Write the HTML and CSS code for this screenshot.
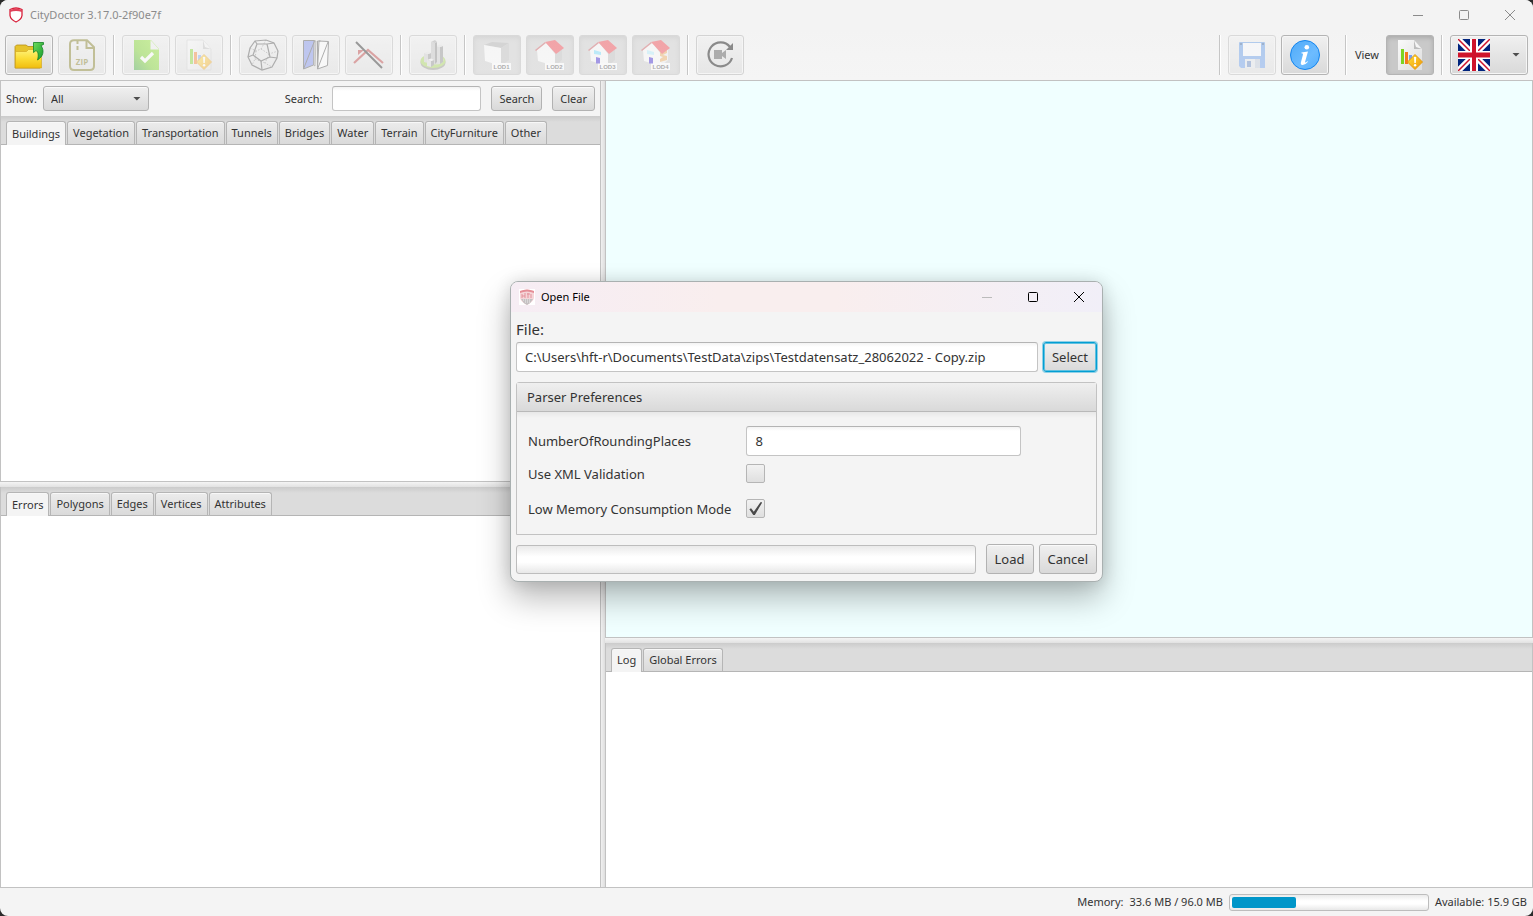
FILE: index.html
```html
<!DOCTYPE html>
<html lang="en">
<head>
<meta charset="utf-8">
<title>CityDoctor 3.17.0-2f90e7f</title>
<link rel="stylesheet" href="styles.css">
</head>
<body>
<svg class="defs" aria-hidden="true">
  <defs>
    <linearGradient id="gFolder" x1="0" y1="0" x2="0" y2="1"><stop offset="0" stop-color="#fff27a"/><stop offset=".5" stop-color="#fbdc35"/><stop offset="1" stop-color="#f0bd10"/></linearGradient>
    <linearGradient id="gArrow" x1="0" y1="0" x2="1" y2="1"><stop offset="0" stop-color="#6fdc5c"/><stop offset="1" stop-color="#119a2c"/></linearGradient>
    <linearGradient id="gCheck" x1="0" y1="1" x2="1" y2="0"><stop offset="0" stop-color="#2c9a28"/><stop offset=".4" stop-color="#6ccd10"/><stop offset="1" stop-color="#8fe820"/></linearGradient>
    <linearGradient id="gPage" x1="0" y1="0" x2="1" y2="1"><stop offset="0" stop-color="#fafafa"/><stop offset="1" stop-color="#dedede"/></linearGradient>
    <linearGradient id="gWarn" x1="0" y1="0" x2="1" y2="1"><stop offset="0" stop-color="#ffe23c"/><stop offset="1" stop-color="#f09400"/></linearGradient>
    <linearGradient id="gInfo" x1="0" y1="0" x2="1" y2="1"><stop offset="0" stop-color="#4faaf8"/><stop offset=".6" stop-color="#6dbcff"/><stop offset="1" stop-color="#55aefc"/></linearGradient>
    <linearGradient id="gDisk" x1="0" y1="0" x2="0" y2="1"><stop offset="0" stop-color="#4f8fe4"/><stop offset="1" stop-color="#5b93ea"/></linearGradient>
  </defs>
</svg>

<div class="window">
  <header class="titlebar">
    <svg class="shield" viewBox="0 0 16 16"><path d="M2 2.500Q8-.5 14 2.500V8.500Q13.500 12.500 8 15 2.500 12.500 2 8.500z" fill="#fff" stroke="#d8203a" stroke-width="1.300"/><path d="M2 3Q8 0 14 3V5Q8 3 2 5z" fill="#e0415a"/></svg>
    <span class="app-title">CityDoctor 3.17.0-2f90e7f</span>
    <div class="caption caption-main">
      <button aria-label="Minimize"><svg viewBox="0 0 12 12"><path d="M1 6.500h10"/></svg></button>
      <button aria-label="Maximize"><svg viewBox="0 0 12 12"><rect x="1.500" y="1.500" width="9" height="9" rx="1"/></svg></button>
      <button aria-label="Close"><svg viewBox="0 0 12 12"><path d="M1 1l10 10M11 1L1 11"/></svg></button>
    </div>
  </header>

  <div class="toolbar" role="toolbar">
    <button class="tool" aria-label="Open file"><svg viewBox="0 0 32 32">
      <path d="M2 29V7.500l1.500-1.500h9.500l2 1.500h12v21.500z" fill="#e6c32c" stroke="#b88f14" stroke-width=".8"/>
      <path d="M2.500 12.500h11l2-2h13v18.500h-26z" fill="url(#gFolder)" stroke="#d0a21b" stroke-width=".6"/>
      <path d="M20.500 3.500h10v2l-2.500 1c3.500 5 2.500 11-3.500 14.500 1.500-5 .5-8.500-1.500-9.500l-2.500 2z" fill="url(#gArrow)" stroke="#148127" stroke-width=".8"/></svg></button>
    <button class="tool" disabled aria-label="Zip"><svg viewBox="0 0 32 32">
      <path d="M8 1.200h13l7 7V27q0 4-4 4H8q-4 0-4-4V5q0-3.800 4-3.800z" fill="none" stroke="#76710f" stroke-width="2"/><path d="M20.500 2v7h7" fill="none" stroke="#76710f" stroke-width="2"/><path d="M11.500 2v3M11.500 7v4" stroke="#76710f" stroke-width="2"/>
      <text x="16" y="26" class="zip-text">ZIP</text></svg></button>
    <i class="sep"></i>
    <button class="tool" disabled aria-label="Check"><svg viewBox="0 0 32 32">
      <path d="M4 1h17l8 9v21H4z" fill="url(#gCheck)"/><path d="M20.500 1v9.500h8.500z" fill="#eee"/><path d="M11 18l4 4 8-8" fill="none" stroke="#fff" stroke-width="3.200"/></svg></button>
    <button class="tool" disabled aria-label="Report"><svg viewBox="0 0 32 32">
      <path d="M4 1h16l8 9v21H4z" fill="url(#gPage)" stroke="#b8b8b8" stroke-width=".6"/>
      <path d="M20 1v9h8z" fill="#bcbcbc"/><path d="M20 1l8 9-6-2z" fill="#f5f5f5"/>
      <path d="M7 10h3v15H7z" fill="#7ed321"/><path d="M11 13h3v12h-3z" fill="#f5791f"/><path d="M15 16h3v7h-3z" fill="#7aa0f0"/>
      <path d="M21 15.500l7.500 7.500-7.500 7.500-7.500-7.500z" fill="url(#gWarn)" stroke="#e39a12"/>
      <path d="M20 18h2.200l-.4 6h-1.400z" fill="#fff"/><circle cx="21.100" cy="26.200" r="1.200" fill="#fff"/></svg></button>
    <i class="sep"></i>
    <button class="tool" disabled aria-label="Show solid"><svg viewBox="0 0 32 32" fill="none" stroke="#454545" stroke-width="1.200">
      <path d="M8 2l11-1 8 3 4 8-1 7-5 9-10 3-10-5-4-8 2-9z"/><path d="M8 2l2 3 10 0 7-1M10 5L6 16l8 6 9-4-3-13M6 16l-5 2M14 22l1 9M23 18l7 1"/>
      <path d="M3 9l6 3 5-2 5-9M14 10l8 5 9-3M9 12l-1 8-3 6M22 15l-4 9 7 4M8 20l10 4" stroke-width=".6" stroke-dasharray="1.500 1.500"/></svg></button>
    <button class="tool" disabled aria-label="Show faces"><svg viewBox="0 0 32 32" stroke="#444" stroke-width="1">
      <path d="M3.500 1.500h11l-1 24.500-10 4z" fill="#6f82e8"/><path d="M14 1.500l2 .5-1 25-1.500-1z" fill="#bbb" stroke-width=".6"/><path d="M3.500 30L14.500 2" fill="none"/>
      <path d="M17.500 30l1.500-28 9.500.500-1 24z" fill="#fff"/><path d="M17.500 30L28 3M17.500 30V2h3" fill="none"/></svg></button>
    <button class="tool" disabled aria-label="Show edges"><svg viewBox="0 0 32 32" fill="none">
      <path d="M1 24L15 11l15 13" stroke="#b52c2c" stroke-width="2.200"/><path d="M5 11h6l-6 5z" fill="#b52c2c"/><path d="M3 3l26 26" stroke="#111" stroke-width="2"/></svg></button>
    <i class="sep"></i>
    <button class="tool" disabled aria-label="City model"><svg viewBox="0 0 32 32">
      <ellipse cx="16" cy="23.500" rx="12.500" ry="7.500" fill="#8a8a80"/><ellipse cx="16" cy="22" rx="12.500" ry="7" fill="#9fd04a"/><ellipse cx="19" cy="21" rx="7.500" ry="4.500" fill="#c5c9bd"/>
      <path d="M7 14l4 1v9l-4-1z" fill="#c9c9c9"/><path d="M11 15l3-1v9l-3 1z" fill="#8b8b8b"/><path d="M7 14l4-1.500 3 1.500-3 1z" fill="#dedede"/>
      <path d="M19 7l4 1v17l-4-1z" fill="#c9c9c9"/><path d="M23 8l3-1v16l-3 2z" fill="#858585"/><path d="M19 7l4-1.500 3 1.500-3 1z" fill="#dedede"/>
      <path d="M14 3l4 1v21l-4-1z" fill="#bcbcbc"/><path d="M18 4l2-1v20l-2 2z" fill="#7c7c7c"/><path d="M14 3l4-2 2 2-2 1z" fill="#a0a0a0"/>
      <path d="M10 21l4 1v6l-4-1z" fill="#d4d4d4"/><path d="M14 22l3-1v5l-3 2z" fill="#888"/><path d="M10 21l4-1.500 3 1.500-3 1z" fill="#eee"/></svg></button>
    <i class="sep"></i>
    <button class="tool on" disabled aria-label="LOD1"><svg viewBox="0 0 32 32"><path d="M3 6l8-3 17 1-8 5z" fill="#a6a6a6"/><path d="M3 6l17 3v18L4 22z" fill="#fafafa"/><path d="M20 9l8-5v17l-8 6z" fill="#b8b8b8"/><path d="M11 24h19v7H11z" fill="#fff"/><text x="20.500" y="30" class="lod-text">LOD1</text></svg></button>
    <button class="tool on" disabled aria-label="LOD2"><svg viewBox="0 0 32 32"><path d="M3 11l9-8 9 12v12L4 22z" fill="#fafafa"/><path d="M21 15l7-5v11l-7 6z" fill="#b8b8b8"/><path d="M11 3l10-2 9 8-8 6z" fill="#f0303a"/><path d="M11 3l1 1-10 8-1-1z" fill="#c84a50"/><path d="M11 24h19v7H11z" fill="#fff"/><text x="20.500" y="30" class="lod-text">LOD2</text></svg></button>
    <button class="tool on" disabled aria-label="LOD3"><svg viewBox="0 0 32 32"><path d="M3 11l9-8 9 12v12L4 22z" fill="#fafafa"/><path d="M21 15l7-5v11l-7 6z" fill="#b8b8b8"/><path d="M11 3l10-2 9 8-8 6z" fill="#f0303a"/><path d="M11 3l1 1-10 8-1-1z" fill="#c84a50"/><path d="M7 11l7 2v3l-7-1z" fill="#6bdcff"/><path d="M11 24h19v7H11z" fill="#fff"/><path d="M9 18l4 1v5.500H9z" fill="#2b10ce"/><text x="20.500" y="30" class="lod-text">LOD3</text></svg></button>
    <button class="tool on" disabled aria-label="LOD4"><svg viewBox="0 0 32 32"><path d="M3 11l9-8 9 12v12L4 22z" fill="#fafafa"/><path d="M21 15l7-5v11l-7 6z" fill="#eee"/><path d="M20 13l7-2v3l-4 2 4 1v4l-7 2v-3l3-2-3-1z" fill="#efa64e"/><path d="M11 3l10-2 9 8-8 6z" fill="#f0303a"/><path d="M11 3l1 1-10 8-1-1z" fill="#c84a50"/><path d="M7 11l7 2v3l-7-1z" fill="#aeeeff"/><path d="M11 24h19v7H11z" fill="#fff"/><path d="M9 18l4 1v5.500H9z" fill="#2b10ce"/><text x="20.500" y="30" class="lod-text">LOD4</text></svg></button>
    <i class="sep"></i>
    <button class="tool camera" disabled aria-label="Reset camera"><svg viewBox="0 0 32 32"><path d="M26 8A12 12 0 1 0 28 19" fill="none" stroke="#222" stroke-width="2.200"/><path d="M29 4v7h-7z" fill="#222"/><path d="M10 11h8v3l4-3v9l-4-3v3h-8z" fill="#666"/></svg></button>
    <span class="spacer"></span>
    <i class="sep"></i>
    <button class="tool" disabled aria-label="Save"><svg viewBox="0 0 32 32"><path d="M3 4q0-1 1-1h24q1 0 1 1v25H5l-2-2z" fill="url(#gDisk)"/><path d="M7 4h18v13H7z" fill="#f8fafe"/><path d="M9 20h15v9H9z" fill="#dfe3ea"/><path d="M11 22h4v6h-4z" fill="#5379bd"/><path d="M19 20h5v9h-5z" fill="#b9c4d6"/><path d="M4 4h2v2H4zM26 4h2v2h-2z" fill="#23508f"/></svg></button>
    <button class="tool" aria-label="About"><svg viewBox="0 0 32 32"><circle cx="16" cy="16" r="14.500" fill="url(#gInfo)" stroke="#1485ee" stroke-width="1"/><circle cx="17.800" cy="8.200" r="2.300" fill="#fff"/><path d="M12.500 13.500l6.500-1-3 10.500q-.3 1.500 2.500-.8l.5.600q-3 3.500-5.500 3.300-2.300-.3-1.500-3.100l2-7.500q.3-1.200-1.700-1.200z" fill="#fff"/></svg></button>
    <i class="sep wide"></i>
    <span class="view-label">View</span>
    <button class="tool on" aria-label="Toggle report view"><svg viewBox="0 0 32 32">
      <path d="M4 1h16l8 9v21H4z" fill="url(#gPage)"/>
      <path d="M20 1v9h8z" fill="#bcbcbc"/><path d="M20 1l8 9-6-2z" fill="#f5f5f5"/>
      <path d="M7 10h3v15H7z" fill="#7ed321"/><path d="M11 13h3v12h-3z" fill="#f5791f"/><path d="M15 16h3v7h-3z" fill="#7aa0f0"/>
      <path d="M21 15.500l7.500 7.500-7.500 7.500-7.500-7.500z" fill="url(#gWarn)" stroke="#e39a12"/>
      <path d="M20 18h2.200l-.4 6h-1.400z" fill="#fff"/><circle cx="21.100" cy="26.200" r="1.200" fill="#fff"/></svg></button>
    <i class="sep"></i>
    <button class="tool language" aria-label="Language" aria-haspopup="true"><svg viewBox="0 0 32 32">
      <path d="M0 0h32v32H0z" fill="#00247d"/><path d="M0 0l32 32M32 0L0 32" stroke="#fff" stroke-width="6"/><path d="M0 0l32 32M32 0L0 32" stroke="#cf142b" stroke-width="1.500"/><path d="M16 0v32M0 16h32" stroke="#fff" stroke-width="8"/><path d="M16 0v32" stroke="#cf142b" stroke-width="4"/><path d="M0 16h32" stroke="#cf142b" stroke-width="5"/></svg><i class="caret"></i></button>
  </div>

  <main class="workspace">
    <section class="left">
      <div class="pane features">
        <form class="filter">
          <label for="show">Show:</label>
          <span class="select-wrap"><select id="show"><option>All</option></select><i class="caret"></i></span>
          <span class="spacer"></span>
          <label for="search">Search:</label>
          <input id="search" class="field" type="text">
          <button type="button" class="btn">Search</button>
          <button type="button" class="btn">Clear</button>
        </form>
        <nav class="tabs" role="tablist">
          <button class="tab active">Buildings</button><button class="tab">Vegetation</button><button class="tab">Transportation</button><button class="tab">Tunnels</button><button class="tab">Bridges</button><button class="tab">Water</button><button class="tab">Terrain</button><button class="tab">CityFurniture</button><button class="tab">Other</button>
        </nav>
        <div class="content"></div>
      </div>
      <div class="divider-h"></div>
      <div class="pane details">
        <nav class="tabs" role="tablist">
          <button class="tab active">Errors</button><button class="tab">Polygons</button><button class="tab">Edges</button><button class="tab">Vertices</button><button class="tab">Attributes</button>
        </nav>
        <div class="content"></div>
      </div>
    </section>
    <div class="divider-v"></div>
    <section class="right">
      <div class="view3d"></div>
      <div class="divider-h"></div>
      <div class="pane logs">
        <nav class="tabs" role="tablist">
          <button class="tab active">Log</button><button class="tab">Global Errors</button>
        </nav>
        <div class="content"></div>
      </div>
    </section>
  </main>

  <footer class="status">
    <label for="mem">Memory:</label>
    <span>33.6 MB / 96.0 MB</span>
    <progress id="mem" class="bar" max="100" value="33"></progress>
    <span>Available: 15.9 GB</span>
  </footer>
</div>

<div class="dialog" role="dialog" aria-labelledby="dlg-title">
  <header class="dialog-title">
    <svg class="shield" viewBox="0 0 16 16"><path d="M0 0h16v16H0z" fill="#fff"/><path d="M1 2Q8-1 15 2v7q-1 4-7 7-6-3-7-7z" fill="#f5d5d8"/><path d="M1 2Q8-1 15 2v2Q8 1 1 4z" fill="#e58e97"/><path d="M3 5v4M6 4v5M8 5h3M9 4v5M12 5v4M3 7h3" stroke="#e3929b" fill="none"/><path d="M2 10h12q-2 4-6 6-4-2-6-6z" fill="#c4c0c1"/><path d="M4 11h8M6 13h5" stroke="#eee" stroke-dasharray="1 1"/></svg>
    <span id="dlg-title">Open File</span>
    <div class="caption caption-dialog">
      <button class="dim" aria-label="Minimize"><svg viewBox="0 0 12 12"><path d="M1 6.500h10"/></svg></button>
      <button aria-label="Maximize"><svg viewBox="0 0 12 12"><rect x="1.500" y="1.500" width="9" height="9" rx="1"/></svg></button>
      <button aria-label="Close"><svg viewBox="0 0 12 12"><path d="M1 1l10 10M11 1L1 11"/></svg></button>
    </div>
  </header>
  <div class="dialog-body">
    <label class="file-label" for="file">File:</label>
    <div class="row">
      <input id="file" class="field grow" type="text" value="C:\Users\hft-r\Documents\TestData\zips\Testdatensatz_28062022 - Copy.zip">
      <button class="btn focused">Select</button>
    </div>
    <section class="titled">
      <h2>Parser Preferences</h2>
      <div class="prefs">
        <label for="places">NumberOfRoundingPlaces</label><input id="places" class="field" type="text" value="8">
        <label for="xml">Use XML Validation</label><input id="xml" type="checkbox">
        <label for="low">Low Memory Consumption Mode</label><input id="low" type="checkbox" checked>
      </div>
    </section>
    <div class="row actions">
      <progress class="bar grow" max="100" value="0" aria-label="Loading progress"></progress>
      <button class="btn load">Load</button>
      <button class="btn">Cancel</button>
    </div>
  </div>
</div>
</body>
</html>
```

FILE: styles.css
```css
* { box-sizing: border-box; }
html, body { height: 100%; }
body {
  margin: 0;
  background: #2b2b2b;
  color: #333;
  font: 11px/16px "Noto Sans", "Open Sans", sans-serif;
}
button, input, select { font: inherit; color: inherit; margin: 0; }
.defs { position: absolute; width: 0; height: 0; }
.spacer, .grow { flex: 1; }

.window {
  height: 100%;
  display: flex;
  flex-direction: column;
  background: #f4f4f4;
  border-radius: 8px;
  overflow: hidden;
}

.titlebar { display: flex; align-items: center; height: 29px; padding-left: 8px; background: #f3f3f3; color: #8b8b8b; }
.shield { width: 16px; height: 16px; margin-right: 6px; }
.caption { display: flex; margin-left: auto; }
.caption button { width: 46px; height: 28px; padding: 0; border: 0; background: none; display: grid; place-items: center; }
.caption svg { width: 12px; height: 12px; fill: none; stroke: currentColor; stroke-width: 1; }
.caption .dim { color: #bbb; }

.toolbar {
  display: flex;
  align-items: center;
  gap: 5px;
  height: 52px;
  padding: 0 5px;
  border-bottom: 1px solid #c2c2c2;
  background: linear-gradient(#f3f3f3, #f5f5f5);
}
.tool {
  width: 48px;
  height: 40px;
  padding: 0;
  display: flex;
  align-items: center;
  justify-content: center;
  border: 1px solid #b4b4b4;
  border-radius: 3px;
  background: linear-gradient(#f0f0f0, #d9d9d9);
  box-shadow: inset 0 0 0 1px #f6f6f6;
}
.tool svg { width: 32px; height: 32px; }
.tool:disabled { opacity: .4; }
.tool.on { background: #c9c9c9; box-shadow: inset 0 2px 4px #aaa; }
.tool.camera:disabled { opacity: .5; }
.sep { width: 2px; height: 40px; margin: 0 2px; border-left: 1px solid #c6c6c6; background: #fff; }
.sep.wide { margin-left: 11px; }
.view-label { margin: 0 2px 0 1px; }
.zip-text { font: bold 8px "Open Sans", sans-serif; fill: #76710f; text-anchor: middle; }
.lod-text { font: bold 6px "Liberation Sans", sans-serif; fill: #444; text-anchor: middle; }
.caret { width: 8px; height: 4px; background: #4d4d4d; clip-path: polygon(0 0, 100% 0, 50% 100%); }
.language { width: 78px; justify-content: space-between; padding: 0 7px; }

.workspace { flex: 1; min-height: 0; display: flex; }
.left { flex: 601; min-width: 0; display: flex; flex-direction: column; }
.right { flex: 928; min-width: 0; display: flex; flex-direction: column; }
.pane { min-height: 0; display: flex; flex-direction: column; border: 1px solid #c2c2c2; border-top: 0; }
.features { flex: 401; }
.details { flex: 401; border-bottom: 0; }
.view3d { flex: 557; background: #f0ffff; border: 1px solid #c2c2c2; border-top: 0; }
.logs { flex: 245; border-bottom: 0; }
.content { flex: 1; background: #fff; }
.divider-h { height: 5px; background: linear-gradient(#f4f4f4, #e2e2e2); }
.divider-v { width: 4px; background: linear-gradient(90deg, #f0f0f0, #dedede); }

.filter { display: flex; align-items: center; height: 35px; padding: 0 5px; }
.select-wrap { display: grid; align-items: center; width: 106px; margin-left: 6px; }
.select-wrap > * { grid-area: 1 / 1; }
.select-wrap .caret { justify-self: end; margin-right: 8px; pointer-events: none; }
select { appearance: none; width: 100%; height: 25px; padding: 0 7px; }
select, .btn {
  border: 1px solid #b2b2b2;
  border-radius: 3px;
  background: linear-gradient(#f0f0f0, #d9d9d9);
  box-shadow: inset 0 1px 0 #fafafa;
}
.btn { height: 25px; padding: 0 7px; white-space: nowrap; }
.filter .btn { margin-left: 10px; }
.field {
  height: 25px;
  min-width: 0;
  padding: 0 8px;
  border: 1px solid #c4c4c4;
  border-top-color: #b4b4b4;
  border-radius: 3px;
  background: linear-gradient(#f3f3f3, #fff 4px);
}
.filter .field { width: 149px; margin-left: 10px; }

.tabs {
  display: flex;
  align-items: flex-end;
  gap: 1px;
  height: 29px;
  padding-left: 5px;
  border-bottom: 1px solid #b5b5b5;
  background: linear-gradient(#cbcbcb, #dcdcdc 6px);
}
.tab {
  height: 23px;
  padding: 0 5px;
  border: 1px solid #b5b5b5;
  border-bottom: 0;
  border-radius: 3px 3px 0 0;
  background: linear-gradient(#ececec, #dadada);
  box-shadow: inset 0 1px 0 #f8f8f8;
}
.tab.active { height: 24px; margin-bottom: -1px; background: #f4f4f4; }

.status { display: flex; align-items: center; justify-content: flex-end; gap: 6px; height: 29px; padding: 0 6px; border-top: 1px solid #c2c2c2; }
.bar {
  appearance: none;
  width: 200px;
  height: 17px;
  padding: 2px;
  border: 1px solid #bdbdbd;
  border-radius: 3px;
  background: linear-gradient(#eaeaea, #fff 40%, #fff 60%, #e8e8e8);
}
.bar::-webkit-progress-bar { background: none; }
.bar::-webkit-progress-value { background: #0096c9; border-radius: 2px; }

.dialog {
  position: absolute;
  left: 510px;
  top: 281px;
  width: 593px;
  border: 1px solid #a9b0b0;
  border-radius: 8px;
  background: #f4f4f4;
  box-shadow: 0 16px 32px rgba(0, 0, 0, .28), 0 0 16px rgba(0, 0, 0, .12);
  font-size: 13px;
  line-height: 20px;
  overflow: hidden;
}
.dialog-title { display: flex; align-items: center; height: 30px; padding-left: 8px; background: linear-gradient(90deg, #f6edf4, #f9eeee 35%, #f9eeee 55%, #f1eff8); color: #000; font-size: 11px; }
.dialog-body { padding: 7px 5px; display: flex; flex-direction: column; }
.file-label { height: 23px; font-size: 15px; }
.row { display: flex; align-items: center; gap: 5px; }
.dialog .btn, .dialog .field { height: 30px; }
.dialog .btn { padding: 0 8px; }
.dialog .focused { border-color: #039ed3; box-shadow: 0 0 0 1px #8fd0e6, inset 0 0 0 1px #5fc0df; }
.titled { margin-top: 10px; border: 1px solid #c2c2c2; border-radius: 3px 3px 0 0; }
.titled h2 { margin: 0; height: 29px; padding: 0 10px; border-bottom: 1px solid #b9b9b9; font-size: 13px; font-weight: normal; line-height: 28px; background: linear-gradient(#efefef, #d9d9d9); }
.prefs { display: grid; grid-template-columns: max-content 275px; grid-template-rows: 30px 35px 35px; column-gap: 15px; align-items: center; padding: 14px 11px 8px; background: linear-gradient(#e8e8e8, #f4f4f4 6px); }
input[type="checkbox"] { appearance: none; width: 19px; height: 19px; border: 1px solid #b5b5b5; border-radius: 2px; background: linear-gradient(#f2f2f2, #dfdfdf); display: grid; place-items: center; }
input[type="checkbox"]:checked::after { content: ""; width: 13px; height: 13px; background: #4a4a4a; clip-path: polygon(0 55%, 13% 48%, 34% 75%, 85% 2%, 100% 2%, 42% 100%, 30% 100%); }
.actions { margin-top: 9px; }
.dialog .bar { height: 29px; }
.load { margin-left: 5px; }
```
